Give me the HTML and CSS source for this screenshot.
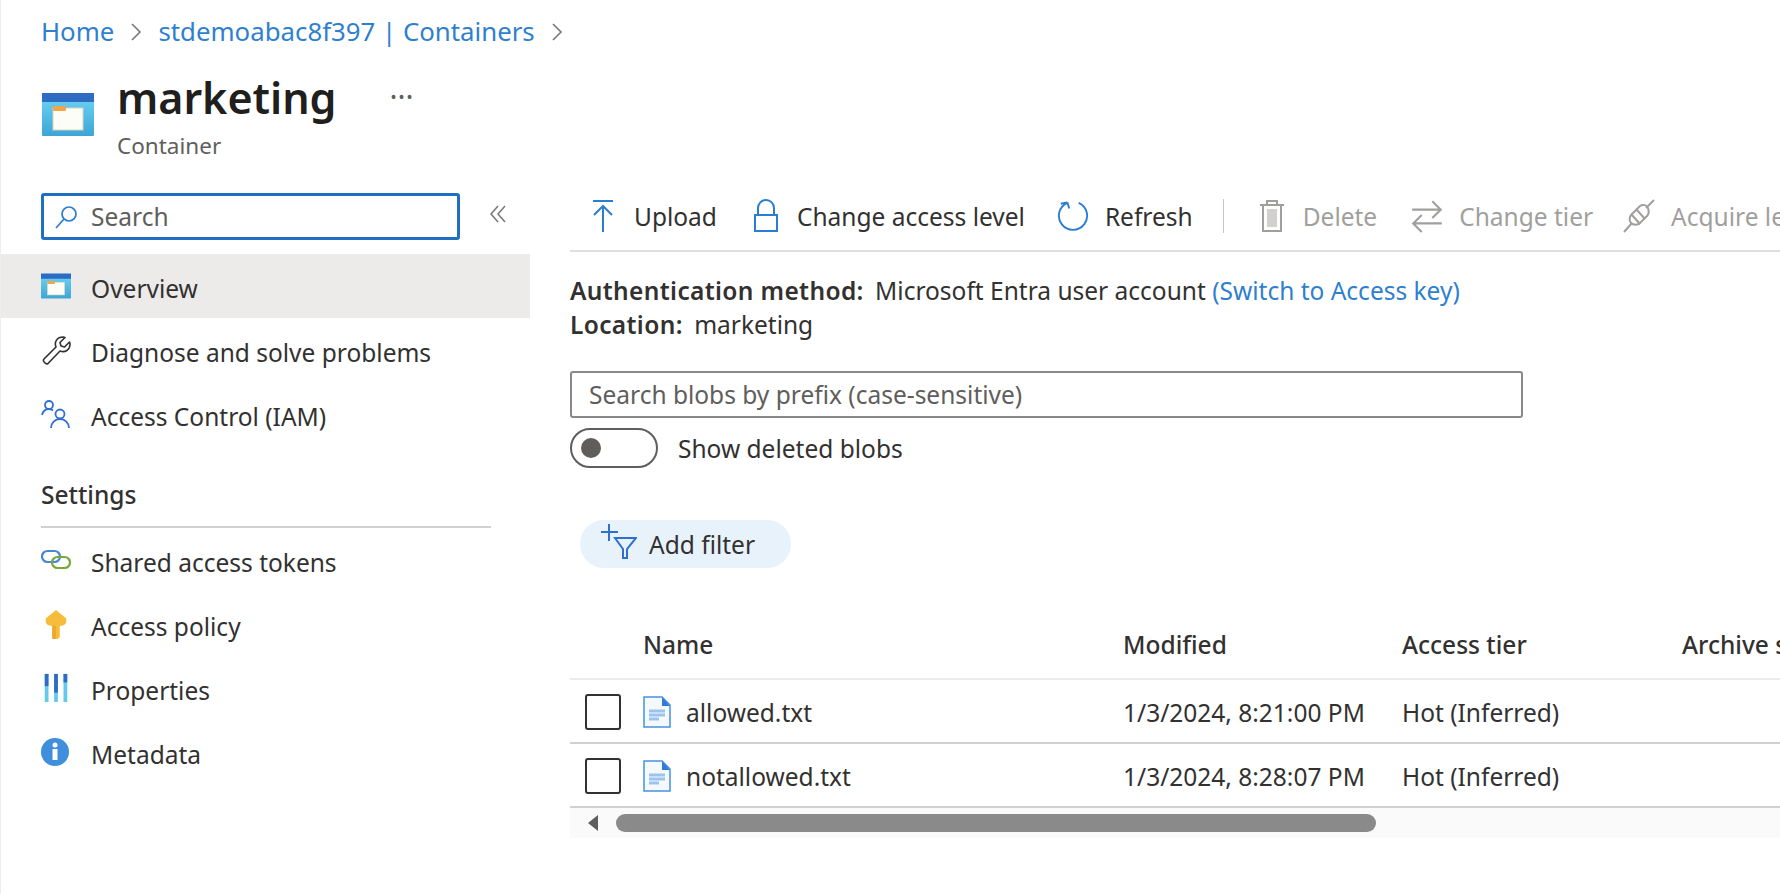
FILE: index.html
```html
<!DOCTYPE html>
<html lang="en">
<head>
    <meta charset="UTF-8">
    <title>marketing - Container</title>
    <link rel="stylesheet" href="styles.css">
</head>
<body>
    <svg class="defs" width="0" height="0">
        <defs>
            <linearGradient id="boxFill" x1="0" y1="0" x2="0" y2="1">
                <stop offset="0" stop-color="#6fd6f5"/>
                <stop offset="1" stop-color="#3da5d6"/>
            </linearGradient>
            <symbol id="containerIcon" viewBox="0 0 52 43">
                <rect width="52" height="43" rx="1" fill="url(#boxFill)"/>
                <rect width="52" height="9" fill="#2e6cc4"/>
                <rect x="11" y="15" width="30" height="22" fill="#fdfdf8" stroke="#d9d4b8"/>
                <rect x="11" y="13" width="13" height="5" rx="1" fill="#f0a44b"/>
            </symbol>
            <symbol id="fileIcon" viewBox="0 0 28 32">
                <path d="M1 1h18l8 8v22H1z" fill="#f4f9fe" stroke="#4a90e2" stroke-width="1.500"/>
                <path d="M19 1l8 9h-8z" fill="#2e7cd6"/>
                <path d="M6 15h16M6 19h16M6 23h10" stroke="#9cc3ee" stroke-width="3"/>
            </symbol>
        </defs>
    </svg>

    <nav class="breadcrumb">
        <a href="#">Home</a>
        <svg class="crumb-sep" viewBox="0 0 12 20"><path d="M2 2l8 8-8 8" fill="none" stroke="#777" stroke-width="1.6"/></svg>
        <a href="#">stdemoabac8f397 | Containers</a>
        <svg class="crumb-sep" viewBox="0 0 12 20"><path d="M2 2l8 8-8 8" fill="none" stroke="#777" stroke-width="1.6"/></svg>
    </nav>

    <header class="title-row">
        <svg class="title-icon"><use href="#containerIcon"/></svg>
        <div class="title-text">
            <div class="title-line">
                <h1>marketing</h1>
                <span class="more">&middot;&middot;&middot;</span>
            </div>
            <div class="subtitle">Container</div>
        </div>
    </header>

    <div class="main">
        <aside class="sidebar">
            <div class="side-search-row">
                <div class="side-search">
                    <svg class="nav-icon-sm" viewBox="0 0 24 24"><circle cx="15" cy="9" r="7" fill="none" stroke="#2b7cd3" stroke-width="1.7"/><path d="M10 14L2 23" stroke="#2b7cd3" stroke-width="1.7"/></svg>
                    <span>Search</span>
                </div>
                <svg class="collapse" viewBox="0 0 18 18"><path d="M9 1L2 9l7 8M16 1L9 9l7 8" fill="none" stroke="#777" stroke-width="1.500"/></svg>
            </div>

            <a class="nav-item active" href="#">
                <svg class="nav-icon"><use href="#containerIcon"/></svg>
                <span>Overview</span>
            </a>
            <a class="nav-item" href="#">
                <svg class="nav-icon" viewBox="0 0 30 30"><path d="M3 24L15 12c-2-5 1-10 7-10l2 .5-5 5 1 3.500 3.500 1 5-5 .5 2c0 6-5 9-10 7L7 28.500c-2 1.500-6-2.500-4-4.500z" fill="none" stroke="#323130" stroke-width="1.600" stroke-linejoin="round"/></svg>
                <span>Diagnose and solve problems</span>
            </a>
            <a class="nav-item" href="#">
                <svg class="nav-icon" viewBox="0 0 30 30"><g fill="none" stroke="#2f6fd0" stroke-width="1.800"><circle cx="8" cy="6" r="4"/><path d="M1 16c1-4 4-6 7-6 2 0 3 .5 4 1.500"/><circle cx="19" cy="15" r="4.500"/><path d="M10 29c0-5 4-9 9-9s9 4 9 9"/></g></svg>
                <span>Access Control (IAM)</span>
            </a>

            <h2 class="nav-heading">Settings</h2>

            <a class="nav-item" href="#">
                <svg class="nav-icon" viewBox="0 0 30 24"><rect x="1" y="3" width="18" height="11" rx="5.500" fill="none" stroke="#4a86d8" stroke-width="2.200"/><rect x="11" y="9" width="18" height="11" rx="5.500" fill="none" stroke="#78a83c" stroke-width="2.200"/></svg>
                <span>Shared access tokens</span>
            </a>
            <a class="nav-item" href="#">
                <svg class="nav-icon" viewBox="0 0 30 32"><path d="M15 1l11 9v3c0 3-3 5-7 5v11c0 2-2 3-4 3s-4-1-4-3V18c-4 0-7-2-7-5v-3z" fill="#f7bd3a"/><rect x="11" y="18" width="4" height="14" fill="#eda92b"/></svg>
                <span>Access policy</span>
            </a>
            <a class="nav-item" href="#">
                <svg class="nav-icon" viewBox="0 0 30 32"><rect x="3" y="1" width="4" height="30" fill="#63c9ee"/><rect x="3" y="1" width="4" height="13" fill="#2e6cc4"/><rect x="13" y="1" width="4" height="30" fill="#63c9ee"/><rect x="13" y="1" width="4" height="20" fill="#2e6cc4"/><rect x="23" y="1" width="4" height="30" fill="#63c9ee"/><rect x="23" y="1" width="4" height="9" fill="#2e6cc4"/></svg>
                <span>Properties</span>
            </a>
            <a class="nav-item" href="#">
                <svg class="nav-icon" viewBox="0 0 30 30"><circle cx="14" cy="15" r="14" fill="#3f8fdc"/><circle cx="14" cy="8" r="2.500" fill="#fff"/><rect x="11.500" y="12" width="5" height="11" fill="#fff"/></svg>
                <span>Metadata</span>
            </a>
        </aside>

        <section class="content">
            <div class="toolbar">
                <button class="tool tool-loose">
                    <svg class="tool-icon" viewBox="0 0 26 34"><path d="M3 2h20M13 33V7M4 16l9-9 9 9" fill="none" stroke="#2b7cd3" stroke-width="2"/></svg>
                    Upload
                </button>
                <button class="tool tool-tight">
                    <svg class="tool-icon" viewBox="0 0 26 34"><path d="M5 16V9a8 8 0 0 1 16 0v7" fill="none" stroke="#2b7cd3" stroke-width="2"/><rect x="2" y="16" width="22" height="16" fill="none" stroke="#2b7cd3" stroke-width="2"/></svg>
                    Change access level
                </button>
                <button class="tool tool-tighter">
                    <svg class="tool-icon wide" viewBox="0 0 34 34"><path d="M23 3a15 15 0 1 1-12 0M11 2.500L13 9M11 2.500L4 4" fill="none" stroke="#2b7cd3" stroke-width="2"/></svg>
                    Refresh
                </button>
                <span class="tool-sep"></span>
                <button class="tool">
                    <svg class="tool-icon" viewBox="0 0 26 34"><path d="M1 6h24M8 6V2h10v4M4 6v26h18V6" fill="none" stroke="#a19f9d" stroke-width="2"/><rect x="8" y="10" width="10" height="18" fill="#d2d0ce"/></svg>
                    <span class="disabled">Delete</span>
                </button>
                <button class="tool tool-tighter">
                    <svg class="tool-icon wide" viewBox="0 0 30 34"><path d="M1 11h27M20 3l8 8-8 8M29 24H2M10 16l-8 8 8 8" fill="none" stroke="#a19f9d" stroke-width="2"/></svg>
                    <span class="disabled">Change tier</span>
                </button>
                <button class="tool">
                    <svg class="tool-icon wide" viewBox="0 0 32 34"><path d="M1 33l8-9M23 9l8-8" stroke="#a19f9d" stroke-width="2"/><path d="M9 15l8-8c3-2 7-1 8 2s1 6-1 8l-8 8c-3 1-6 1-8-1s-2-6 1-9z" fill="none" stroke="#a19f9d" stroke-width="2"/><path d="M13 10l9 10M8 15l9 10" stroke="#a19f9d" stroke-width="2"/></svg>
                    <span class="disabled">Acquire lease</span>
                </button>
            </div>

            <div class="info-block">
                <div class="info-line"><strong>Authentication method:</strong> Microsoft Entra user account <a href="#">(Switch to Access key)</a></div>
                <div class="info-line"><strong>Location:</strong> marketing</div>
            </div>

            <div class="blob-search">Search blobs by prefix (case-sensitive)</div>

            <div class="toggle-row">
                <span class="toggle"><span class="knob"></span></span>
                <span>Show deleted blobs</span>
            </div>

            <div class="filter-pill">
                <svg class="filter-icon" viewBox="0 0 36 36"><path d="M8 1v17M0 9h17M14 15h21l-9 11v9h-4v-9z" fill="none" stroke="#2f6fd0" stroke-width="2"/></svg>
                <span>Add filter</span>
            </div>

            <div class="grid-row grid-head">
                <span></span>
                <span>Name</span>
                <span>Modified</span>
                <span>Access tier</span>
                <span>Archive status</span>
            </div>
            <div class="grid-row blob-row">
                <span class="checkbox"></span>
                <span class="blob-name">
                    <svg class="file-icon"><use href="#fileIcon"/></svg>
                    allowed.txt
                </span>
                <span>1/3/2024, 8:21:00 PM</span>
                <span>Hot (Inferred)</span>
                <span></span>
            </div>
            <div class="grid-row blob-row">
                <span class="checkbox"></span>
                <span class="blob-name">
                    <svg class="file-icon"><use href="#fileIcon"/></svg>
                    notallowed.txt
                </span>
                <span>1/3/2024, 8:28:07 PM</span>
                <span>Hot (Inferred)</span>
                <span></span>
            </div>
            <div class="hscroll">
                <span class="scroll-arrow"></span>
                <span class="scroll-thumb"></span>
            </div>
        </section>
    </div>
</body>
</html>
```

FILE: styles.css
```css
body {
    font-family: "Noto Sans", "Open Sans", sans-serif;
    font-size: 24.500px;
    color: #323130;
    background: #fff;
    margin: 0;
    height: 894px;
    overflow: hidden;
    border-left: 1px solid #eeeeee;
    box-sizing: border-box;
}

a {
    color: inherit;
    text-decoration: none;
}

.defs {
    display: block;
    height: 0;
}

.breadcrumb {
    display: flex;
    align-items: center;
    height: 62px;
    padding-left: 40px;
    font-size: 25.800px;
    color: #2f7fcf;
}

.crumb-sep {
    width: 12px;
    height: 20px;
    margin: 2px 16px 0 16px;
}

.title-row {
    display: flex;
    height: 131px;
    padding-left: 41px;
}

.title-icon {
    width: 52px;
    height: 43px;
    margin: 31px 23px 0 0;
}

.title-line {
    display: flex;
    margin-top: 6px;
    height: 60px;
    line-height: 60px;
}

h1 {
    margin: 0;
    font-size: 43px;
    font-weight: 600;
    color: #201f1e;
}

.more {
    margin-left: 53px;
    font-size: 30px;
    line-height: 57px;
    color: #605e5c;
}

.subtitle {
    margin-top: 3px;
    font-size: 22.500px;
    line-height: 30px;
    color: #605e5c;
}

.main {
    display: flex;
}

.sidebar {
    width: 529px;
    flex-shrink: 0;
}

.side-search-row {
    display: flex;
    align-items: center;
    height: 47px;
    margin: 0 0 14px 40px;
}

.side-search {
    display: flex;
    align-items: center;
    width: 419px;
    height: 47px;
    box-sizing: border-box;
    border: 3px solid #1f6fc4;
    border-radius: 3px;
    padding-left: 10px;
    color: #605e5c;
}

.nav-icon-sm {
    width: 24px;
    height: 24px;
    margin-right: 13px;
}

.collapse {
    width: 18px;
    height: 18px;
    margin: -6px 0 0 29px;
}

.nav-item {
    display: flex;
    align-items: center;
    height: 64px;
    padding-left: 40px;
}

.nav-item span {
    margin-top: 4px;
}

.nav-item.active {
    background: #edebe9;
}

.nav-icon {
    width: 30px;
    height: 30px;
    margin-right: 20px;
}

.nav-heading {
    margin: 33px 39px 0 40px;
    padding-bottom: 15px;
    border-bottom: 2px solid #d2d0ce;
    font-size: 24.500px;
    font-weight: 500;
    line-height: 32px;
}

.content {
    flex: 1;
    min-width: 0;
    padding-left: 40px;
    overflow: hidden;
}

.toolbar {
    display: flex;
    align-items: center;
    height: 46px;
    padding: 0 0 11px 20px;
    border-bottom: 2px solid #e1dfdd;
    white-space: nowrap;
}

.tool {
    display: flex;
    flex-shrink: 0;
    align-items: center;
    gap: 18px;
    margin-right: 34px;
    padding: 0;
    border: none;
    background: none;
    font: inherit;
    color: #323130;
}

.tool-loose {
    margin-right: 36px;
}

.tool-tight {
    margin-right: 32px;
}

.tool-tighter {
    margin-right: 30px;
}

.disabled {
    color: #a19f9d;
}

.tool-icon {
    width: 26px;
    height: 34px;
}

.tool-icon.wide {
    width: 32px;
    height: 36px;
    margin-right: -2px;
}

.tool-sep {
    flex-shrink: 0;
    width: 1px;
    height: 34px;
    margin-right: 35px;
    background: #c8c6c4;
}

.info-block {
    margin-top: 22px;
}

.info-line {
    line-height: 34px;
    white-space: nowrap;
}

.info-line strong {
    font-weight: 600;
    margin-right: 5px;
    letter-spacing: 0.36px;
}

.info-line a {
    color: #2f7fcf;
}

.blob-search {
    display: flex;
    align-items: center;
    width: 953px;
    height: 47px;
    margin-top: 29px;
    padding-left: 17px;
    box-sizing: border-box;
    border: 2px solid #8a8886;
    border-radius: 3px;
    color: #605e5c;
}

.toggle-row {
    display: flex;
    align-items: center;
    gap: 20px;
    margin-top: 10px;
}

.toggle {
    display: flex;
    align-items: center;
    width: 88px;
    height: 40px;
    padding-left: 9px;
    box-sizing: border-box;
    border: 2px solid #605e5c;
    border-radius: 20px;
}

.knob {
    width: 20px;
    height: 20px;
    border-radius: 50%;
    background: #605e5c;
}

.filter-pill {
    display: flex;
    align-items: center;
    width: 211px;
    height: 48px;
    margin: 52px 0 43px 10px;
    padding-left: 21px;
    box-sizing: border-box;
    border-radius: 24px;
    background: #e8f2fb;
}

.filter-icon {
    width: 36px;
    height: 36px;
    margin: -6px 12px 0 0;
}

.grid-row {
    display: grid;
    grid-template-columns: 73px 480px 279px 280px 1fr;
    align-items: center;
    white-space: nowrap;
}

.grid-head {
    height: 67px;
    border-bottom: 2px solid #edebe9;
    font-weight: 500;
}

.blob-row {
    height: 60px;
    padding-top: 2px;
    border-bottom: 2px solid #d2d0ce;
}

.checkbox {
    width: 36px;
    height: 36px;
    margin-left: 15px;
    box-sizing: border-box;
    border: 2px solid #323130;
    border-radius: 3px;
}

.blob-name {
    display: flex;
    align-items: center;
    gap: 15px;
}

.file-icon {
    width: 28px;
    height: 32px;
}

.hscroll {
    display: flex;
    align-items: center;
    height: 30px;
    background: #fafafa;
}

.scroll-arrow {
    width: 0;
    height: 0;
    margin-left: 18px;
    border-top: 8px solid transparent;
    border-bottom: 8px solid transparent;
    border-right: 10px solid #605e5c;
}

.scroll-thumb {
    width: 760px;
    height: 18px;
    margin-left: 18px;
    border-radius: 9px;
    background: #8a8a8a;
}
```
